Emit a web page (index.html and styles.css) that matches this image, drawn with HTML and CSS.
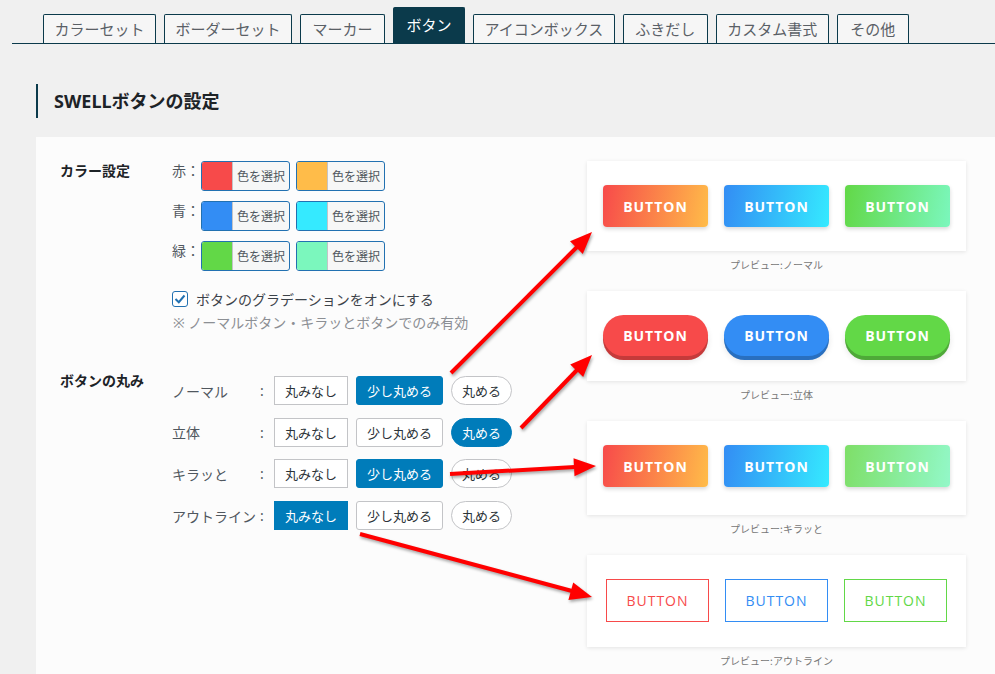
FILE: index.html
```html
<!DOCTYPE html>
<html lang="ja">
<head>
<meta charset="utf-8">
<title>SWELLボタンの設定</title>
<link rel="stylesheet" href="styles.css">
</head>
<body>
<nav class="tabs">
  <span class="tab">カラーセット</span>
  <span class="tab">ボーダーセット</span>
  <span class="tab tab-4">マーカー</span>
  <span class="tab is-active">ボタン</span>
  <span class="tab">アイコンボックス</span>
  <span class="tab tab-4">ふきだし</span>
  <span class="tab">カスタム書式</span>
  <span class="tab">その他</span>
</nav>

<h2 class="title">SWELLボタンの設定</h2>

<section class="panel">
  <div class="settings">
    <div class="field">
      <div class="field-label">カラー設定</div>
      <div class="field-body">
        <div class="color-row">
          <span class="color-name">赤：</span>
          <span class="picker"><span class="swatch sw-red"></span><span class="picker-text">色を選択</span></span>
          <span class="picker"><span class="swatch sw-red2"></span><span class="picker-text">色を選択</span></span>
        </div>
        <div class="color-row">
          <span class="color-name">青：</span>
          <span class="picker"><span class="swatch sw-blue"></span><span class="picker-text">色を選択</span></span>
          <span class="picker"><span class="swatch sw-blue2"></span><span class="picker-text">色を選択</span></span>
        </div>
        <div class="color-row">
          <span class="color-name">緑：</span>
          <span class="picker"><span class="swatch sw-green"></span><span class="picker-text">色を選択</span></span>
          <span class="picker"><span class="swatch sw-green2"></span><span class="picker-text">色を選択</span></span>
        </div>
        <div class="check-row">
          <span class="checkbox"><svg width="14" height="14" viewBox="0 0 14 14"><polyline points="2.5,7 5.8,10.2 11.5,3.5" fill="none" stroke="#2271b1" stroke-width="2"/></svg></span>
          <span>ボタンのグラデーションをオンにする</span>
        </div>
        <div class="note">※ ノーマルボタン・キラッとボタンでのみ有効</div>
      </div>
    </div>

    <div class="field field-round">
      <div class="field-label">ボタンの丸み</div>
      <div class="field-body round-body">
        <div class="round-row">
          <span class="round-name">ノーマル</span><span class="colon">:</span>
          <span class="rbtn">丸みなし</span><span class="rbtn rbtn-mid is-on">少し丸める</span><span class="rbtn rbtn-pill">丸める</span>
        </div>
        <div class="round-row">
          <span class="round-name">立体</span><span class="colon">:</span>
          <span class="rbtn">丸みなし</span><span class="rbtn rbtn-mid">少し丸める</span><span class="rbtn rbtn-pill is-on">丸める</span>
        </div>
        <div class="round-row">
          <span class="round-name">キラッと</span><span class="colon">:</span>
          <span class="rbtn">丸みなし</span><span class="rbtn rbtn-mid is-on">少し丸める</span><span class="rbtn rbtn-pill">丸める</span>
        </div>
        <div class="round-row">
          <span class="round-name">アウトライン</span><span class="colon">:</span>
          <span class="rbtn is-on">丸みなし</span><span class="rbtn rbtn-mid">少し丸める</span><span class="rbtn rbtn-pill">丸める</span>
        </div>
      </div>
    </div>
  </div>

  <div class="previews">
    <div class="card">
      <span class="pbtn g-red">BUTTON</span>
      <span class="pbtn g-blue">BUTTON</span>
      <span class="pbtn g-green">BUTTON</span>
    </div>
    <div class="caption">プレビュー:ノーマル</div>

    <div class="card">
      <span class="pbtn solid s-red">BUTTON</span>
      <span class="pbtn solid s-blue">BUTTON</span>
      <span class="pbtn solid s-green">BUTTON</span>
    </div>
    <div class="caption">プレビュー:立体</div>

    <div class="card card-kira">
      <span class="pbtn g-red">BUTTON</span>
      <span class="pbtn g-blue">BUTTON</span>
      <span class="pbtn g-green glint">BUTTON</span>
    </div>
    <div class="caption">プレビュー:キラッと</div>

    <div class="card card-outline">
      <span class="pbtn outline o-red">BUTTON</span>
      <span class="pbtn outline o-blue">BUTTON</span>
      <span class="pbtn outline o-green">BUTTON</span>
    </div>
    <div class="caption">プレビュー:アウトライン</div>
  </div>
</section>

<svg class="arrows" width="995" height="674" viewBox="0 0 995 674">
  <g class="arrow">
    <line x1="451" y1="373" x2="577" y2="247"/>
    <polygon points="592,232 582.8,254 570,241.2"/>
  </g>
  <g class="arrow">
    <line x1="521" y1="428" x2="577" y2="370"/>
    <polygon points="592,355 583.2,377.1 570.2,364.5"/>
  </g>
  <g class="arrow">
    <line x1="450" y1="474" x2="575" y2="467"/>
    <polygon points="596,466 574.5,476.2 573.5,458.2"/>
  </g>
  <g class="arrow">
    <line x1="360" y1="534" x2="572" y2="591"/>
    <polygon points="592,597 568.4,599.9 573.2,582.5"/>
  </g>
</svg>
</body>
</html>
```

FILE: styles.css
```css
html, body {
  margin: 0;
  padding: 0;
  overflow: hidden;
}

body {
  position: relative;
  width: 995px;
  height: 674px;
  background: #f0f0f0;
  font-family: "Noto Sans", "Noto Sans CJK JP", sans-serif;
  color: #3c434a;
}

/* ---------- tabs ---------- */
.tabs {
  display: flex;
  align-items: flex-end;
  gap: 8px;
  margin-left: 12px;
  padding: 7px 0 0 31px;
  border-bottom: 1px solid #0b3a4b;
}

.tab {
  box-sizing: border-box;
  min-width: 72px;
  height: 29px;
  padding: 0 10.5px;
  border: 1px solid #0b3a4b;
  border-bottom: 0;
  border-radius: 2px 2px 0 0;
  background: #f6f6f6;
  color: #5a6066;
  font-family: "Noto Sans CJK JP", sans-serif;
  font-size: 15px;
  line-height: 27px;
  text-align: center;
  white-space: nowrap;
}

.tab-4 {
  min-width: 85px;
}

.tab.is-active {
  height: 36px;
  line-height: 34px;
  background: #0b3a4b;
  color: #fff;
}

/* ---------- title ---------- */
.title {
  margin: 40px 0 0 36px;
  height: 34px;
  padding-left: 16px;
  border-left: 2px solid #0b3a4b;
  font-size: 18px;
  font-weight: 700;
  line-height: 34px;
  color: #1d2327;
}

/* ---------- panel ---------- */
.panel {
  display: flex;
  margin: 19px 0 0 36px;
  padding: 24px 0 30px 24px;
  background: #fcfcfc;
  min-height: 560px;
}

.settings {
  width: 527px;
  flex: none;
}

.field {
  display: flex;
  align-items: flex-start;
}

.field-label {
  width: 112px;
  flex: none;
  font-size: 14px;
  font-weight: 700;
  line-height: 20px;
  color: #1d2327;
}

.field-body {
  display: flex;
  flex-direction: column;
}

.color-row {
  display: flex;
  align-items: flex-start;
  gap: 6px;
  height: 30px;
  margin-bottom: 10px;
}

.color-row:nth-child(3) {
  margin-bottom: 0;
}

.color-name {
  width: 23px;
  font-size: 14px;
  line-height: 20px;
  color: #50575e;
}

.picker {
  box-sizing: border-box;
  display: flex;
  width: 89px;
  height: 30px;
  border: 1px solid #2271b1;
  border-radius: 3px;
  overflow: hidden;
  background: #f6f7f7;
}

.swatch {
  width: 30px;
  flex: none;
  border-right: 1px solid #c3c4c7;
}

.sw-red { background: #f74a4a; }
.sw-red2 { background: #ffbc49; }
.sw-blue { background: #338df4; }
.sw-blue2 { background: #35eaff; }
.sw-green { background: #62d847; }
.sw-green2 { background: #7bf7bd; }

.picker-text {
  flex: 1;
  text-align: center;
  font-family: "Noto Sans CJK JP", sans-serif;
  font-size: 12px;
  line-height: 28px;
  color: #50575e;
}

.check-row {
  display: flex;
  align-items: center;
  gap: 8px;
  height: 24px;
  margin-top: 16px;
  font-size: 14px;
  color: #3c434a;
}

.checkbox {
  box-sizing: border-box;
  display: flex;
  align-items: center;
  justify-content: center;
  width: 16px;
  height: 16px;
  border: 1px solid #2271b1;
  border-radius: 3px;
  background: #fff;
}

.note {
  font-size: 14px;
  line-height: 24px;
  color: #8c8f94;
  padding-left: 1px;
}

.field-round {
  margin-top: 36px;
}

.round-body {
  padding-top: 5px;
  gap: 12.7px;
}

.round-row {
  display: flex;
  align-items: center;
  height: 29px;
}

.round-name {
  width: 88px;
  font-size: 14px;
  color: #50575e;
}

.colon {
  width: 14px;
  font-size: 14px;
  color: #50575e;
}

.rbtn {
  box-sizing: border-box;
  height: 29px;
  margin-right: 8px;
  padding: 0 10px;
  border: 1px solid #c3c4c7;
  background: #fff;
  font-family: "Noto Sans CJK JP", sans-serif;
  font-size: 13px;
  line-height: 27px;
  color: #2c3338;
  white-space: nowrap;
}

.rbtn-mid { border-radius: 3px; }
.rbtn-pill { border-radius: 15px; }

.rbtn.is-on {
  background: #007cba;
  border-color: #007cba;
  color: #fff;
}

/* ---------- previews ---------- */
.previews {
  width: 379px;
  flex: none;
}

.card {
  box-sizing: border-box;
  display: flex;
  justify-content: center;
  align-items: flex-start;
  gap: 16px;
  height: 90px;
  padding-top: 24px;
  background: #fff;
  box-shadow: 0 1px 4px rgba(0, 0, 0, 0.1);
}

.card-kira { height: 94px; }
.card-outline { height: 92px; }

.caption {
  box-sizing: border-box;
  height: 40px;
  padding-top: 8px;
  font-family: "Noto Sans CJK JP", sans-serif;
  font-size: 10px;
  line-height: 12px;
  text-align: center;
  color: #777;
}

.pbtn {
  position: relative;
  box-sizing: border-box;
  display: flex;
  align-items: center;
  justify-content: center;
  width: 105px;
  height: 42px;
  border-radius: 4px;
  color: #fff;
  font-family: "Open Sans", "Noto Sans", sans-serif;
  font-size: 14px;
  font-weight: 700;
  letter-spacing: 1px;
  box-shadow: 0 2px 4px rgba(0, 0, 0, 0.16);
}

.g-red { background: linear-gradient(100deg, #f74a4a 0%, #ffbc49 100%); }
.g-blue { background: linear-gradient(100deg, #338df4 0%, #35eaff 100%); }
.g-green { background: linear-gradient(100deg, #62d847 0%, #7bf7bd 100%); }

.glint::after {
  content: "";
  position: absolute;
  inset: 0;
  border-radius: inherit;
  background: rgba(255, 255, 255, 0.18);
}

.solid {
  height: 41px;
  border-radius: 21px;
}

.s-red { background: #f74a4a; box-shadow: 0 4px 0 #c53a3a, 0 5px 6px rgba(0, 0, 0, 0.1); }
.s-blue { background: #338df4; box-shadow: 0 4px 0 #296fbf, 0 5px 6px rgba(0, 0, 0, 0.1); }
.s-green { background: #62d847; box-shadow: 0 4px 0 #4ea938, 0 5px 6px rgba(0, 0, 0, 0.1); }

.outline {
  width: 103px;
  height: 43px;
  border-radius: 0;
  background: transparent;
  border: 1px solid currentColor;
  font-weight: 400;
  box-shadow: none;
}

.o-red { color: #f74a4a; }
.o-blue { color: #338df4; }
.o-green { color: #62d847; }

/* ---------- annotation arrows ---------- */
.arrows {
  position: absolute;
  left: 0;
  top: 0;
  pointer-events: none;
}

.arrow {
  filter: drop-shadow(1px 2px 1.5px rgba(0, 0, 0, 0.35));
}

.arrow line {
  stroke: #ff0000;
  stroke-width: 4;
}

.arrow polygon {
  fill: #ff0000;
}
```
